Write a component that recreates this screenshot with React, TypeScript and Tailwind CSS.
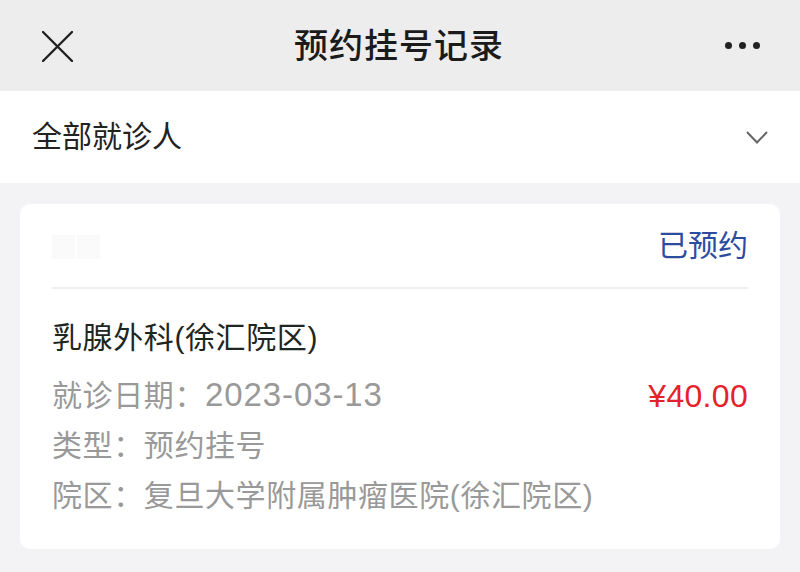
export default function App() {
    const font = {fontFamily: '"Liberation Sans", "Noto Sans CJK SC", sans-serif'};
    return (
        <div className="w-[800px] h-[572px] bg-[#f3f3f5] flex flex-col overflow-hidden" style={font}>
            {/* header */}
            <div className="h-[91px] bg-[#ededed] flex items-center justify-between px-[42px] relative">
                <svg width="31" height="31" viewBox="0 0 31 31" className="mt-[1px]">
                    <path d="M1 1 L30 30 M30 1 L1 30" stroke="#222" strokeWidth="2.4" strokeLinecap="round"/>
                </svg>
                <h1 className="text-[34px] font-medium text-[#1b1b1b] tracking-[1px] leading-none">预约挂号记录</h1>
                <div className="flex gap-[7px] mr-[-2px]">
                    <span className="w-[7px] h-[7px] rounded-full bg-[#222]"/>
                    <span className="w-[7px] h-[7px] rounded-full bg-[#222]"/>
                    <span className="w-[7px] h-[7px] rounded-full bg-[#222]"/>
                </div>
            </div>

            {/* filter */}
            <div className="h-[92px] bg-white flex items-center justify-between pl-[32px] pr-[32px]">
                <span className="text-[30px] text-[#222] leading-none">全部就诊人</span>
                <svg width="22" height="13" viewBox="0 0 22 13">
                    <path d="M1 1 L11 11.5 L21 1" fill="none" stroke="#666" strokeWidth="2"/>
                </svg>
            </div>

            {/* card */}
            <div className="mx-[20px] mt-[21px] bg-white rounded-[10px] px-[32px] pb-[28px] tracking-[0.6px]">
                <div className="h-[85px] flex items-center justify-between border-b-2 border-[#eeeeee]">
                    <div className="flex gap-[2px] mt-[2px]">
                        <span className="w-[23px] h-[24px] bg-[#fafafa]"/>
                        <span className="w-[23px] h-[24px] bg-[#fafafa]"/>
                    </div>
                    <span className="text-[30px] text-[#2d4c9f] leading-none tracking-normal">已预约</span>
                </div>
                <div className="pt-[34px] flex flex-col">
                    <div className="text-[30px] text-[#1e2622] leading-none">乳腺外科(徐汇院区)</div>
                    <div className="flex justify-between items-center mt-[17px] text-[30px] leading-[50px]">
                        <span className="text-[#999]">就诊日期：<span className="text-[33px] tracking-[0.9px]">2023-03-13</span></span>
                        <span className="text-[#e5222b] text-[32px] tracking-[0.3px]">¥40.00</span>
                    </div>
                    <div className="text-[30px] leading-[50px] text-[#999]">类型：预约挂号</div>
                    <div className="text-[30px] leading-[50px] text-[#999]">院区：复旦大学附属肿瘤医院(徐汇院区)</div>
                </div>
            </div>
        </div>
    );
}
